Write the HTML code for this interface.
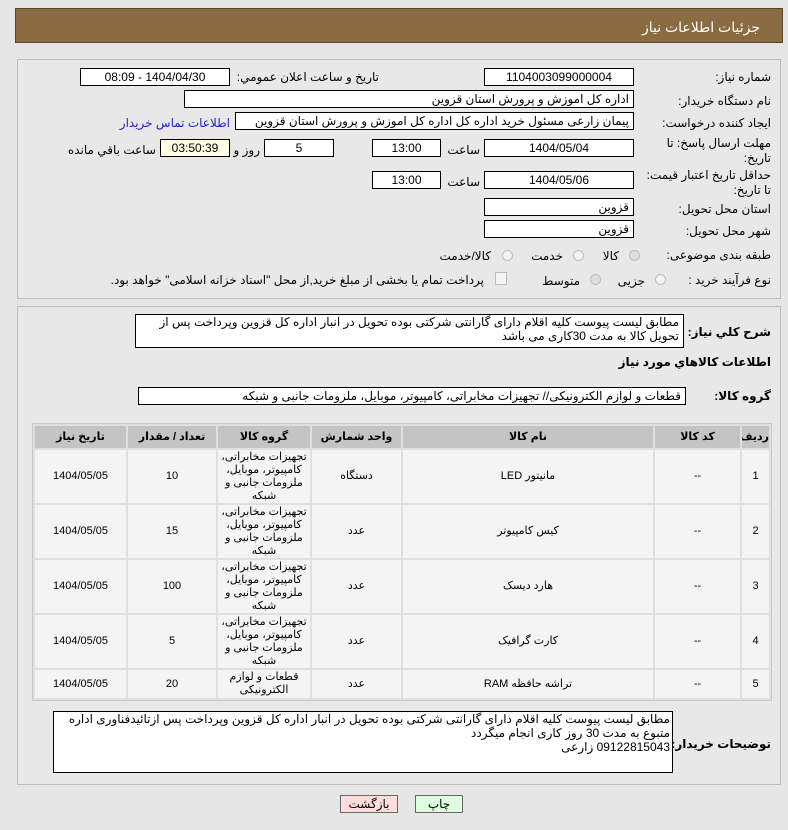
<!DOCTYPE html>
<html><head><meta charset="utf-8"><style>
body{margin:0;width:788px;height:830px;background:#e6e6e6;font-family:"Liberation Sans","DejaVu Sans",sans-serif;font-size:12px;color:#000;position:relative;overflow:hidden}
.a{position:absolute;white-space:nowrap}
.r{position:absolute;white-space:nowrap;text-align:right;direction:rtl}
.box{position:absolute;background:#fff;border:1px solid #000;box-sizing:border-box;height:18px;line-height:16px;direction:rtl;white-space:nowrap;overflow:hidden}
.c{text-align:center}
.pad{padding-right:4px}
.rad{position:absolute;width:11px;height:11px;border-radius:50%;border:1px solid #bbb;background:#f4f4f4;box-sizing:border-box}
.b{font-weight:bold}
table{position:absolute;left:32px;top:423px;width:740px;table-layout:fixed;border-collapse:separate;border-spacing:2px;background:#e0e0e0;border:1px solid #c8c8c8;direction:rtl;box-sizing:border-box}
td,th{background:#f4f4f4;text-align:center;font-size:11px;padding:0;line-height:13px;overflow:hidden}
th{background:#c4c4c4;height:22px;font-weight:bold}
td{height:53px}
tr.last td{height:28px}
</style></head><body>
<div class="a" style="left:15px;top:8px;width:768px;height:35px;background:#8b6b42;border:1px solid #5a4528;box-sizing:border-box"></div>
<div class="r" style="right:28px;top:19px;color:#fff;font-size:14px">جزئیات اطلاعات نیاز</div>

<div class="a" style="left:17px;top:59px;width:764px;height:240px;border:1px solid #bdbdbd;box-sizing:border-box;background:#e8e8e8"></div>
<div class="a" style="left:17px;top:306px;width:764px;height:479px;border:1px solid #bdbdbd;box-sizing:border-box;background:#e8e8e8"></div>

<div class="r" style="right:17px;top:70px">شماره نیاز:</div>
<div class="box c" style="left:484px;top:68px;width:150px">1104003099000004</div>
<div class="r" style="right:409px;top:70px">تاریخ و ساعت اعلان عمومي:</div>
<div class="box c" style="left:80px;top:68px;width:150px">1404/04/30 - 08:09</div>

<div class="r" style="right:17px;top:94px">نام دستگاه خریدار:</div>
<div class="box pad" style="left:184px;top:90px;width:450px">اداره کل اموزش و پرورش استان قزوین</div>

<div class="r" style="right:17px;top:116px">ایجاد کننده درخواست:</div>
<div class="box pad" style="left:235px;top:112px;width:399px">پیمان زارعی مسئول خرید اداره کل اداره کل اموزش و پرورش استان قزوین</div>
<div class="r" style="right:558px;top:116px;color:#2222cc">اطلاعات تماس خریدار</div>

<div class="r" style="right:17px;top:136px">مهلت ارسال پاسخ: تا</div>
<div class="r" style="right:17px;top:151px">تاریخ:</div>
<div class="box c" style="left:484px;top:139px;width:150px">1404/05/04</div>
<div class="r" style="right:308px;top:143px">ساعت</div>
<div class="box c" style="left:372px;top:139px;width:69px">13:00</div>
<div class="box c" style="left:264px;top:139px;width:70px">5</div>
<div class="r" style="right:528px;top:143px">روز و</div>
<div class="box c" style="left:160px;top:139px;width:70px;background:#ffffe6">03:50:39</div>
<div class="r" style="right:632px;top:143px">ساعت باقي مانده</div>

<div class="r" style="right:17px;top:168px">حداقل تاریخ اعتبار قیمت:</div>
<div class="r" style="right:17px;top:183px">تا تاریخ:</div>
<div class="box c" style="left:484px;top:171px;width:150px">1404/05/06</div>
<div class="r" style="right:308px;top:175px">ساعت</div>
<div class="box c" style="left:372px;top:171px;width:69px">13:00</div>

<div class="r" style="right:17px;top:202px">استان محل تحویل:</div>
<div class="box pad" style="left:484px;top:198px;width:150px">قزوین</div>
<div class="r" style="right:17px;top:224px">شهر محل تحویل:</div>
<div class="box pad" style="left:484px;top:220px;width:150px">قزوین</div>

<div class="r" style="right:17px;top:248px">طبقه بندی موضوعی:</div>
<div class="rad" style="left:629px;top:250px;background:#ddd"></div>
<div class="r" style="right:169px;top:249px">کالا</div>
<div class="rad" style="left:573px;top:250px"></div>
<div class="r" style="right:225px;top:249px">خدمت</div>
<div class="rad" style="left:502px;top:250px"></div>
<div class="r" style="right:297px;top:249px">کالا/خدمت</div>

<div class="r" style="right:17px;top:273px">نوع فرآیند خرید :</div>
<div class="rad" style="left:655px;top:274px"></div>
<div class="r" style="right:143px;top:274px">جزیی</div>
<div class="rad" style="left:590px;top:274px;background:#ddd"></div>
<div class="r" style="right:208px;top:274px">متوسط</div>
<div class="a" style="left:495px;top:272px;width:10px;height:11px;border:1px solid #bbb;background:#f4f4f4"></div>
<div class="r" style="right:304px;top:273px">پرداخت تمام یا بخشی از مبلغ خرید,از محل "اسناد خزانه اسلامی" خواهد بود.</div>

<div class="r b" style="right:17px;top:325px">شرح کلي نیاز:</div>
<div class="box pad" style="left:135px;top:314px;width:549px;height:34px;line-height:14px;white-space:normal">مطابق لیست پیوست کلیه اقلام دارای گارانتی شرکتی بوده تحویل در انبار اداره کل قزوین وپرداخت پس از تحویل کالا به مدت 30کاری می باشد</div>
<div class="r b" style="right:17px;top:355px">اطلاعات کالاهاي مورد نیاز</div>
<div class="r b" style="right:17px;top:389px">گروه کالا:</div>
<div class="box pad" style="left:138px;top:387px;width:548px">قطعات و لوازم الکترونیکی// تجهیزات مخابراتی، کامپیوتر، موبایل، ملزومات جانبی و شبکه</div>

<table>
<colgroup><col style="width:27px"><col style="width:85px"><col style="width:250px"><col style="width:89px"><col style="width:92px"><col style="width:88px"><col></colgroup>
<tr><th>ردیف</th><th>کد کالا</th><th>نام کالا</th><th>واحد شمارش</th><th>گروه کالا</th><th>تعداد / مقدار</th><th>تاریخ نیاز</th></tr>
<tr><td>1</td><td>--</td><td>مانیتور LED</td><td>دستگاه</td><td>تجهیزات مخابراتی، کامپیوتر، موبایل، ملزومات جانبی و شبکه</td><td>10</td><td>1404/05/05</td></tr>
<tr><td>2</td><td>--</td><td>کیس کامپیوتر</td><td>عدد</td><td>تجهیزات مخابراتی، کامپیوتر، موبایل، ملزومات جانبی و شبکه</td><td>15</td><td>1404/05/05</td></tr>
<tr><td>3</td><td>--</td><td>هارد دیسک</td><td>عدد</td><td>تجهیزات مخابراتی، کامپیوتر، موبایل، ملزومات جانبی و شبکه</td><td>100</td><td>1404/05/05</td></tr>
<tr><td>4</td><td>--</td><td>کارت گرافیک</td><td>عدد</td><td>تجهیزات مخابراتی، کامپیوتر، موبایل، ملزومات جانبی و شبکه</td><td>5</td><td>1404/05/05</td></tr>
<tr class="last"><td>5</td><td>--</td><td>تراشه حافظه RAM</td><td>عدد</td><td>قطعات و لوازم الکترونیکی</td><td>20</td><td>1404/05/05</td></tr>
</table>

<div class="r b" style="right:17px;top:737px">توضیحات خریدار:</div>
<div class="box" style="left:53px;top:711px;width:620px;height:62px;line-height:14px;white-space:normal;padding-right:2px">مطابق لیست پیوست کلیه اقلام دارای گارانتی شرکتی بوده تحویل در انبار اداره کل قزوین وپرداخت پس ازتائیدفناوری اداره متبوع به مدت 30 روز کاری انجام میگردد<br>09122815043 زارعی</div>

<div class="a c" style="left:340px;top:795px;width:58px;height:18px;line-height:16px;box-sizing:border-box;border:1px solid #666;background:#fdd">بازگشت</div>
<div class="a c" style="left:415px;top:795px;width:48px;height:18px;line-height:16px;box-sizing:border-box;border:1px solid #666;background:#dfd">چاپ</div>
</body></html>
